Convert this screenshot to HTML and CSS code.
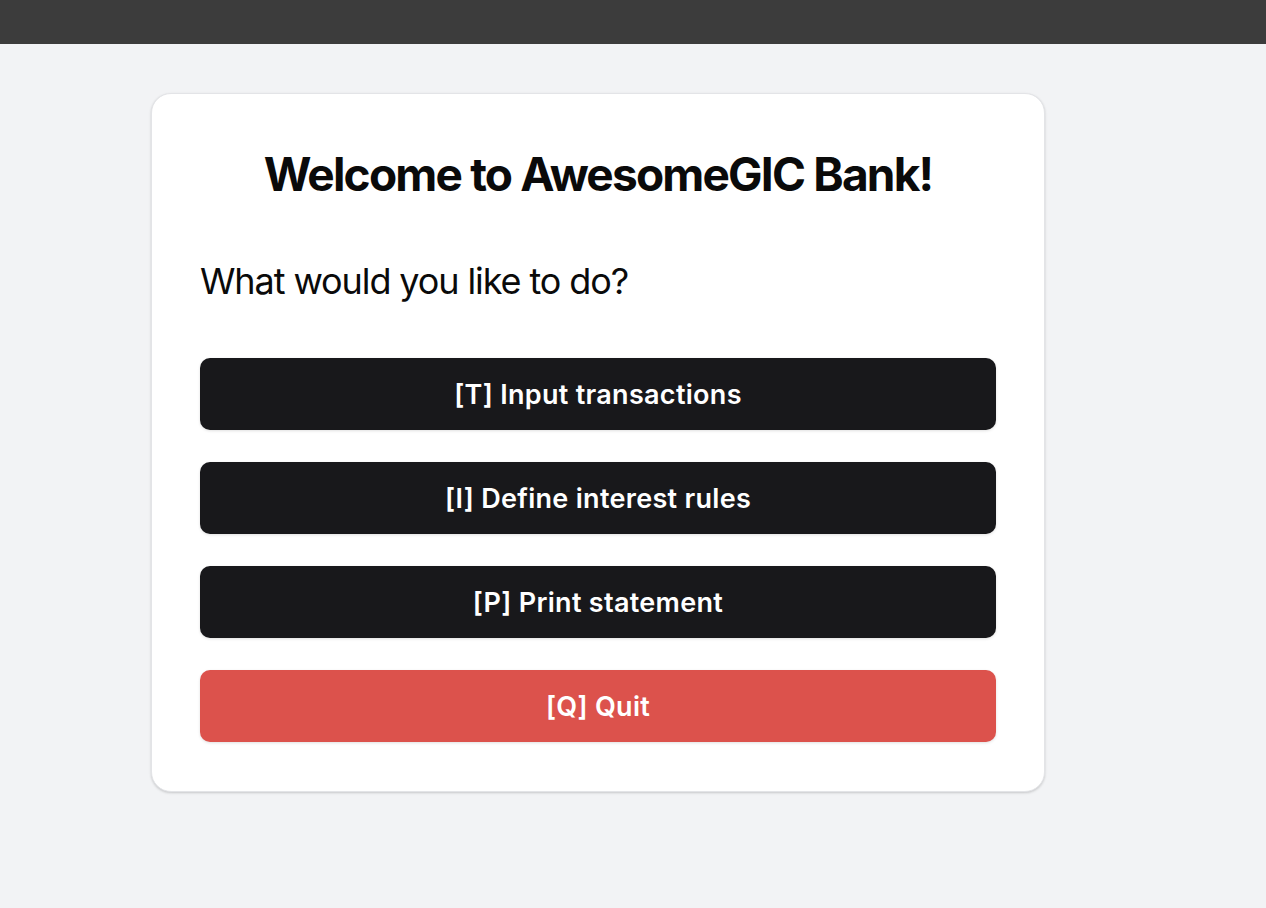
FILE: index.html
```html
<!DOCTYPE html>
<html lang="en">
<head>
<meta charset="utf-8">
<title>AwesomeGIC Bank</title>
<link rel="stylesheet" href="styles.css">
</head>
<body>
<header class="topbar"></header>
<main class="page">
  <section class="card">
    <h1 class="title">Welcome to AwesomeGIC Bank!</h1>
    <p class="prompt">What would you like to do?</p>
    <div class="actions">
      <button class="btn btn-dark">[T] Input transactions</button>
      <button class="btn btn-dark">[I] Define interest rules</button>
      <button class="btn btn-dark">[P] Print statement</button>
      <button class="btn btn-danger">[Q] Quit</button>
    </div>
  </section>
</main>
</body>
</html>
```
FILE: styles.css
```css
html, body {
  margin: 0;
  padding: 0;
}
body {
  background: #f2f3f5;
  font-family: Inter, "Noto Sans", sans-serif;
  color: #0a0a0a;
  min-height: 908px;
}
.topbar {
  height: 44px;
  background: #3c3c3c;
}
.page {
  padding: 49px 0 0 151px;
}
.card {
  width: 894px;
  box-sizing: border-box;
  background: #fff;
  border: 1px solid #e3e4e7;
  border-radius: 20px;
  box-shadow: 0 1px 3px rgba(0,0,0,0.12), 0 1px 2px rgba(0,0,0,0.06);
  padding: 48px 48px 49px 48px;
}
.title {
  margin: 0;
  text-align: center;
  font-size: 46px;
  font-weight: 700;
  letter-spacing: -1.8px;
  line-height: 64px;
  color: #0a0a0a;
}
.prompt {
  margin: 53px 0 55px;
  font-size: 36px;
  font-weight: 400;
  letter-spacing: -1.1px;
  line-height: 44px;
  color: #0a0a0a;
}
.actions {
  display: flex;
  flex-direction: column;
  gap: 32px;
}
.btn {
  height: 72px;
  border: none;
  border-radius: 10px;
  font-family: Inter, "Noto Sans", sans-serif;
  font-size: 27px;
  font-weight: 600;
  letter-spacing: 0.3px;
  color: #fff;
  box-shadow: 0 1px 3px rgba(0,0,0,0.12);
  cursor: pointer;
}
.btn-dark {
  background: #18181b;
}
.btn-danger {
  background: #dc524c;
}
```
